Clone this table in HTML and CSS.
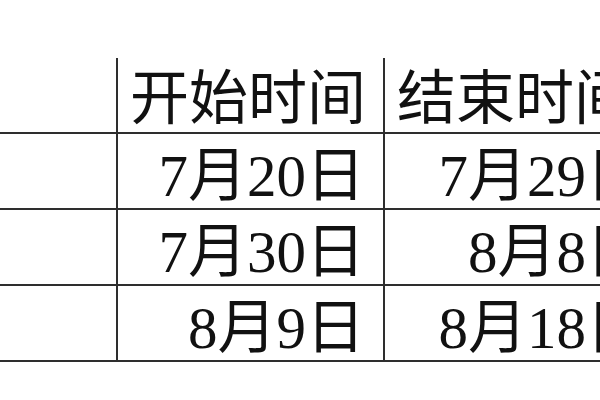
FILE: index.html
```html
<!DOCTYPE html>
<html lang="zh-CN">
<head>
<meta charset="utf-8">
<title>时间表</title>
<link rel="stylesheet" href="styles.css">
</head>
<body>
<div class="sheet">
  <table class="grid">
    <colgroup>
      <col class="c-label">
      <col class="c-date">
      <col class="c-date2">
    </colgroup>
    <tr class="row head">
      <td class="cell first"></td>
      <td class="cell th">开始时间</td>
      <td class="cell th">结束时间</td>
    </tr>
    <tr class="row">
      <td class="cell first"></td>
      <td class="cell num">7月20日</td>
      <td class="cell num">7月29日</td>
    </tr>
    <tr class="row">
      <td class="cell first"></td>
      <td class="cell num">7月30日</td>
      <td class="cell num">8月8日</td>
    </tr>
    <tr class="row">
      <td class="cell first"></td>
      <td class="cell num">8月9日</td>
      <td class="cell num">8月18日</td>
    </tr>
  </table>
</div>
</body>
</html>
```

FILE: styles.css
```css
html, body {
  margin: 0;
  padding: 0;
  background: #ffffff;
  overflow: hidden;
  width: 600px;
  height: 400px;
}

.sheet {
  padding-top: 58px;
  width: 700px;
}

.grid {
  border-collapse: collapse;
  table-layout: fixed;
  width: 664px;
  font-family: "Liberation Serif", "Noto Sans CJK SC", serif;
  font-size: 59px;
  color: #111111;
}

.c-label { width: 117px; }
.c-date { width: 267px; }
.c-date2 { width: 280px; }

.row { height: 76px; }
.head { height: 75px; }

.cell {
  border: 2px solid #2e2e2e;
  padding: 0;
  line-height: 1;
  white-space: nowrap;
  overflow: hidden;
  vertical-align: middle;
}

.head .cell {
  border-top: none;
}

.first {
  border-left: none;
}

.th {
  text-align: left;
  padding-left: 12px;
  padding-top: 9px;
}

.num {
  text-align: right;
  padding-right: 18px;
  padding-top: 10px;
}
```
